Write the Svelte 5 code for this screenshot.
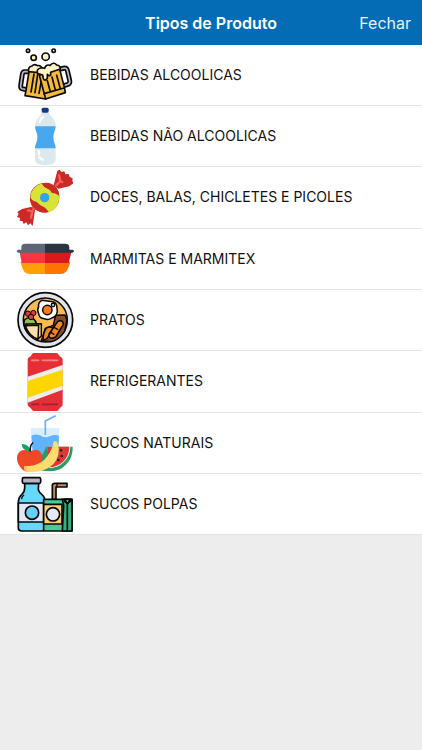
<script lang="ts">
  type ProductType = { icon: string; label: string };

  const types: ProductType[] = [
    { icon: "beer", label: "BEBIDAS ALCOOLICAS" },
    { icon: "bottle", label: "BEBIDAS NÃO ALCOOLICAS" },
    { icon: "candy", label: "DOCES, BALAS, CHICLETES E PICOLES" },
    { icon: "lunchbox", label: "MARMITAS E MARMITEX" },
    { icon: "plate", label: "PRATOS" },
    { icon: "can", label: "REFRIGERANTES" },
    { icon: "juice", label: "SUCOS NATURAIS" },
    { icon: "pulp", label: "SUCOS POLPAS" },
  ];
</script>

<header class="navbar">
  <h1 class="title">Tipos de Produto</h1>
  <button class="close" type="button">Fechar</button>
</header>

<ul class="list">
  {#each types as type}
    <li class="item">
      <button class="row" type="button">
        <svg class="icon" viewBox="0 3 210 180" aria-hidden="true">
          {#if type.icon === "beer"}
            <g stroke="#0b0b0b" stroke-width="5" stroke-linejoin="round" stroke-linecap="round">
              <g fill="#fff1c6">
                <circle cx="54" cy="20" r="5" />
                <circle cx="131" cy="20" r="5" />
                <circle cx="71" cy="41" r="8" />
                <circle cx="107" cy="38" r="11" />
              </g>
              <!-- handles -->
              <path fill="none" stroke-width="15" d="M55 83H43Q38 84 37 91L32 125Q31 135 40 135L48 137" />
              <path fill="none" stroke="#b9b9c9" stroke-width="5" d="M55 83H43Q38 84 37 91L32 125Q31 135 40 135L48 137" />
              <path fill="none" stroke-width="15" d="M151 75L164 72Q170 72 172 79L179 109Q181 118 174 121L162 125" />
              <path fill="none" stroke="#b9b9c9" stroke-width="5" d="M151 75L164 72Q170 72 172 79L179 109Q181 118 174 121L162 125" />
              <!-- left mug -->
              <path fill="#f6b93b" d="M58 77L48 139L45 155L107 165L110 86Z" />
              <path fill="none" d="M72 90L63 144M83 91L75 146M95 105L87 148" />
              <path fill="#fff1c6" d="M56 83Q53 69 66 66Q73 58 82 65Q92 62 98 75V87Z" />
              <!-- right mug -->
              <path fill="#f6b93b" d="M88 94L107 165L166 146L164 134L147 68Z" />
              <path fill="none" d="M102 149L162 132M112 110L121 143M126 99L136 138M140 94L151 134" />
              <path fill="#fff1c6" d="M83 89Q78 75 92 72Q98 71 104 73Q107 60 120 64Q131 52 140 63Q151 64 151 75L122 85V93Q117 98 112 91V103Q105 113 100 104L98 93Z" />
            </g>
          {:else if type.icon === "bottle"}
            <path fill="#dbe9ee" d="M94 21H116Q118 31 128 38Q137 46 137 63L128 96L137 130V165Q137 180 105 180Q75 180 75 165V130L83 96L75 64Q76 45 86 38Q94 31 94 21Z" />
            <path fill="#48a8ef" d="M75 64H137Q137 73 133 80Q127 96 133 113Q137 120 137 130H75Q75 121 79 113Q86 96 79 80Q75 73 75 64Z" />
            <rect x="95" y="8" width="21" height="15" rx="5" fill="#133b83" />
            <path fill="none" stroke="#fff" stroke-width="7" stroke-linecap="round" d="M89 51Q91 41 99 36M87 139V147M88 156Q92 163 99 164" />
          {:else if type.icon === "candy"}
            <path fill="#c92b26" d="M131 58L142 14L149 11L154 18L163 16L166 25L176 24L179 33L188 37L187 44L190 52L178 61L145 68Z" />
            <path fill="#c92b26" d="M76 125L68 180L61 172L54 178L49 169L41 174L37 165L29 165L30 156L21 153L26 144L22 138L36 129L62 123Z" />
            <circle cx="104" cy="95" r="44" fill="#c92b26" />
            <path fill="#d8e337" d="M62 108Q56 77 80 59L95 52Q103 66 119 71Q134 77 147 84Q151 103 138 125Q128 136 116 139Q103 123 85 121Q74 113 62 108Z" />
            <path fill="#c92b26" d="M95 52Q121 45 139 64Q148 75 148 90Q139 81 125 80Q117 66 103 63ZM60 93Q66 105 80 108Q89 117 97 121Q107 124 116 139Q90 144 70 126Q59 112 60 93Z" />
            <circle cx="104" cy="95" r="14" fill="#35a1e7" />
            <path fill="none" stroke="#ff5b5d" stroke-width="7" stroke-linecap="round" stroke-linejoin="round" d="M139 58L151 45L147 28M151 46L157 48M54 133L67 136L71 128M67 137L63 155" />
          {:else if type.icon === "lunchbox"}
            <path fill="#ff9f05" d="M31 101H105V138H61Q47 138 42 130Q38 124 31 101Z" />
            <path fill="#ff7400" d="M105 101H181Q175 124 168 131Q162 138 151 138H105Z" />
            <path fill="#fc3341" d="M29 72H105V105H35Z" />
            <path fill="#db1720" d="M105 72H184L176 105H105Z" />
            <path fill="#5c6677" d="M34 65V56Q35 47 46 47H105V74H25Q20 73 20 70Q20 66 25 65Z" />
            <path fill="#2b3441" d="M105 47H166Q178 47 178 58V65H187Q192 66 192 70Q192 73 187 74H105Z" />
          {:else if type.icon === "plate"}
            <circle cx="106" cy="93" r="82" fill="#e2e3eb" stroke="#090909" stroke-width="5" />
            <g stroke="#090909" stroke-width="4.5" stroke-linejoin="round">
              <circle cx="106" cy="93" r="66" fill="#faba55" />
              <path fill="#8a4b29" d="M137 79L165 78L171 93L164 127Q145 155 123 158L94 155L106 118L130 109Z" />
              <path fill="#8fbd58" d="M43 93Q58 79 72 91Q81 99 78 108L51 125Q39 112 43 93Z" />
              <g stroke-width="3">
                <circle cx="54" cy="74" r="8" fill="#d83e3d" />
                <circle cx="70" cy="72" r="8" fill="#d83e3d" />
                <circle cx="63" cy="84" r="8" fill="#d83e3d" />
              </g>
              <path fill="#fff" d="M95 34L129 38Q138 41 140 49L142 67Q139 84 125 87Q114 95 103 89Q88 89 86 74Q80 63 86 53Q83 42 95 34Z" />
              <circle cx="112" cy="63" r="14" fill="#f77b25" />
              <circle cx="129" cy="48" r="5" fill="#fff" />
              <path fill="#ffd292" d="M47 105L94 104V141L82 152Z" />
              <path fill="#ffe1a7" d="M46 110L86 109L84 150Q57 142 46 110Z" />
              <path fill="#f38727" d="M117 135L143 98Q152 91 159 100Q162 107 155 114L137 144Q126 151 118 145ZM109 117Q120 110 129 118L111 149L100 154Q98 133 109 117Z" />
            </g>
            <path fill="none" stroke="#090909" stroke-width="4" stroke-linecap="round" d="M121 129L132 136M132 115L143 121" />
          {:else if type.icon === "can"}
            <path fill="#e52e36" d="M72 9H139Q143 9 145 13Q149 20 154 22Q158 24 158 29V163Q158 168 154 170Q149 173 146 179Q144 183 139 183H72Q68 183 66 179Q62 173 57 170Q53 168 53 163V29Q53 24 57 22Q62 20 66 13Q68 9 72 9Z" />
            <path fill="#eceded" d="M53 80L158 45V119L53 158Z" />
            <path fill="#ffd500" d="M53 93L158 59V107L53 143Z" />
            <path fill="none" stroke="#ff8282" stroke-width="5" stroke-linecap="round" d="M65 31H86M97 31H143" />
            <path fill="none" stroke="#9c222b" stroke-width="5" stroke-linecap="round" d="M66 163H86M97 163H142" />
          {:else if type.icon === "juice"}
            <path fill="#d9eefe" d="M62 48H148L143 160H71Z" />
            <path fill="#62b3fd" d="M64 71Q78 64 90 70Q105 80 119 73Q135 65 147 72L142 160H71Z" />
            <path fill="none" stroke="#62b3fd" stroke-width="5" d="M106 69V27L137 11" />
            <path fill="#2e9964" d="M188 104Q189 139 167 159Q151 176 121 178L74 175L109 104Z" />
            <path fill="#fff2ef" d="M181 104Q181 132 161 151Q145 167 118 169L113 104Z" />
            <path fill="#dc3934" d="M178 104Q178 131 159 149Q143 165 115 166L113 104Z" />
            <g fill="#222"><circle cx="153" cy="115" r="4" /><circle cx="155" cy="132" r="4" /><circle cx="145" cy="144" r="4" /></g>
            <path fill="#ef4827" d="M62 118Q84 106 94 124Q104 146 83 170Q71 181 58 178Q42 182 31 166Q17 147 22 130Q31 106 62 118Z" />
            <path fill="#19a165" d="M61 118Q36 118 35 96Q59 97 61 118Z" />
            <path fill="none" stroke="#171717" stroke-width="5" stroke-linecap="round" d="M61 117Q59 101 68 93" />
            <path fill="#ffdb70" d="M132 88L139 88Q144 94 146 108Q149 145 119 165Q91 185 47 179Q40 171 44 162Q94 163 115 128Q129 107 129 94Z" />
            <path fill="#f9bd55" d="M43 163L50 162V179L45 178Z" />
          {:else if type.icon === "pulp"}
            <g stroke="#080808" stroke-width="5" stroke-linejoin="round">
              <path fill="#66d8fa" d="M44 31H86L85 50Q87 57 96 65Q105 72 105 87V165Q105 174 96 174H35Q25 174 25 165V87Q26 72 35 65Q44 57 44 45Z" />
              <rect x="37" y="14" width="55" height="17" rx="4" fill="#b8b4c6" />
              <path fill="#e3e6f3" d="M25 90H105V147H25Z" />
              <path fill="#c58a5c" d="M127 80V36Q128 31 134 31H171V42H138V80Z" />
              <path fill="#4acb9a" d="M101 79H186V174H101Z" />
              <path fill="#ffd06d" d="M101 94H156V153H101Z" />
              <path fill="#36ae81" d="M157 79H186V174H157L161 98Z" />
              <path fill="#63e1b2" d="M163 79H181L173 92Z" />
              <path fill="none" d="M161 83L172 92V174M172 92L186 80" />
              <circle cx="66" cy="119" r="20" fill="#69cef5" />
              <circle cx="129" cy="124" r="20" fill="#e6e8f2" />
            </g>
            <path fill="none" stroke="#080808" stroke-width="4" stroke-linecap="round" d="M35 77Q36 71 41 67M141 31V41" />
          {/if}
        </svg>
        <span class="label">{type.label}</span>
      </button>
    </li>
  {/each}
</ul>

<style>
  :global(body) {
    margin: 0;
    background: #ededed;
    font-family: Inter, "Liberation Sans", sans-serif;
  }

  .navbar {
    display: grid;
    grid-template-columns: 1fr auto 1fr;
    align-items: center;
    height: 45px;
    padding: 0 11px;
    background: #036cb5;
    color: #fff;
  }

  .title {
    grid-column: 2;
    margin: 0;
    font-size: 16px;
    font-weight: 600;
    line-height: 24px;
  }

  .close {
    justify-self: end;
    padding: 0;
    border: none;
    background: none;
    color: #e4f3ff;
    font: inherit;
    font-size: 16px;
    line-height: 24px;
    cursor: pointer;
  }

  .list {
    margin: 0;
    padding: 0;
    list-style: none;
    background: #fff;
  }

  .item {
    border-bottom: 1px solid #e3e3e3;
  }

  .item:nth-child(3n) {
    padding-bottom: 1px;
  }

  .row {
    display: flex;
    align-items: center;
    gap: 10px;
    width: 100%;
    padding: 0 10px;
    border: none;
    background: none;
    color: #111;
    font: inherit;
    text-align: left;
    cursor: pointer;
  }

  .row:active {
    background: #e5e5e5;
  }

  .icon {
    flex: none;
    width: 70px;
    height: 60px;
  }

  .label {
    font-size: 14px;
    line-height: 20px;
  }
</style>
